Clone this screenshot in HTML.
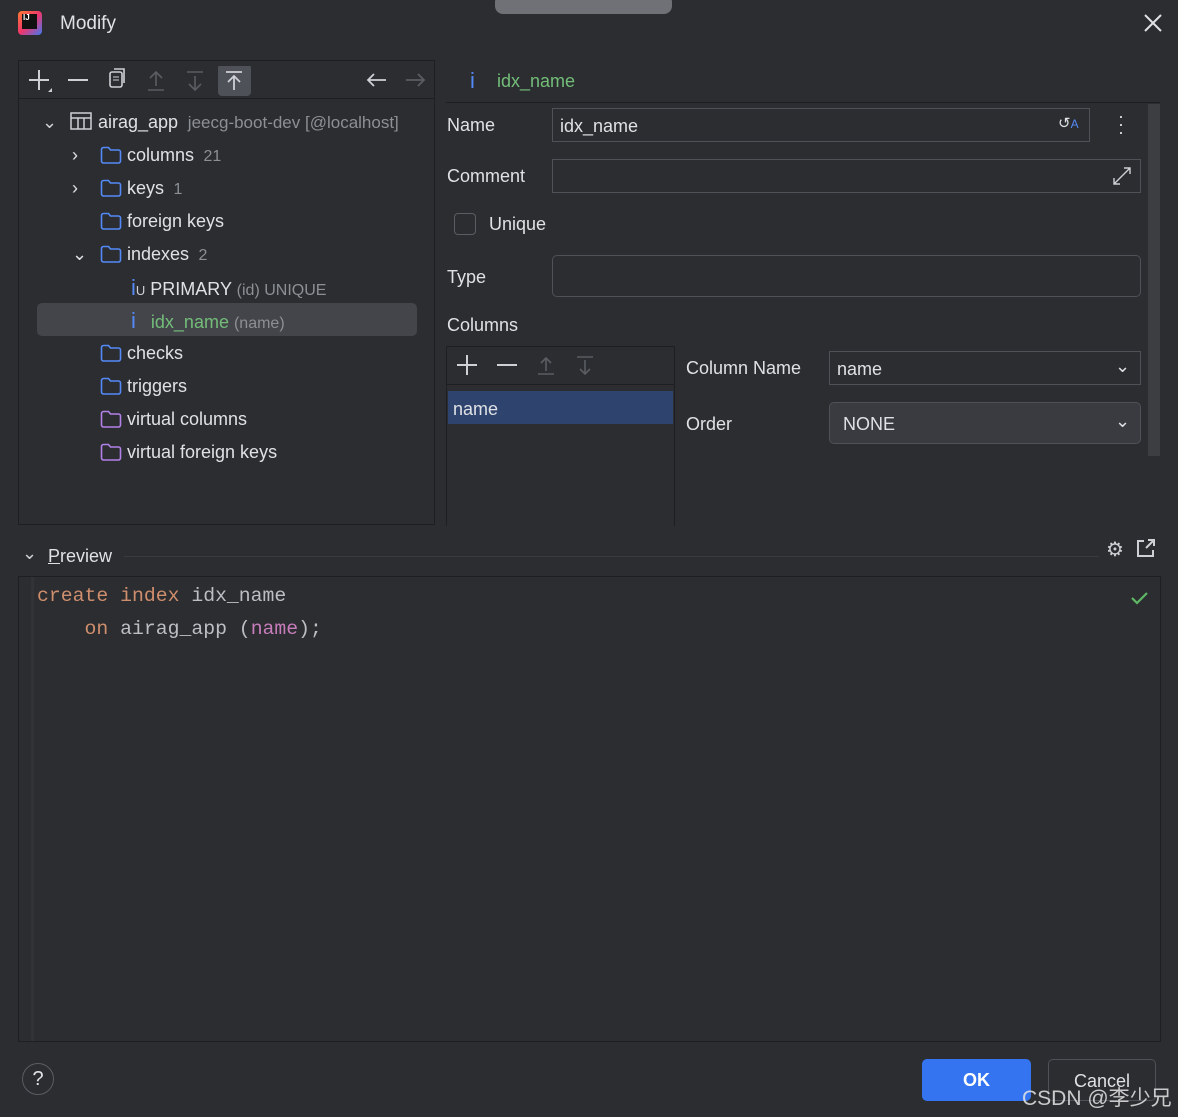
<!DOCTYPE html><html><head><style>
body{margin:0;width:1178px;height:1117px;background:#2b2d30;font-family:"Liberation Sans",sans-serif;color:#dfe1e5;position:relative;overflow:hidden;font-size:18px}
.a{position:absolute}
.mono{font-family:"Liberation Mono",monospace}
.row{position:absolute;height:33px;line-height:33px;white-space:nowrap}
.g{color:#8c8f94}
.fold{display:inline-block;width:22px;height:18px;vertical-align:-3px;margin-right:5px}
.inp{position:absolute;border:1px solid #4e5157;box-sizing:border-box;background:#2b2d30}
</style></head><body>
<svg width="0" height="0" style="position:absolute"><defs>
<symbol id="fb" viewBox="0 0 22 18"><path d="M1.5 3.5a2 2 0 0 1 2-2h5l2 2.5h8a2 2 0 0 1 2 2v9a2 2 0 0 1-2 2h-15a2 2 0 0 1-2-2z" fill="none" stroke="#548af7" stroke-width="1.6"/></symbol>
<symbol id="fv" viewBox="0 0 22 18"><path d="M1.5 3.5a2 2 0 0 1 2-2h5l2 2.5h8a2 2 0 0 1 2 2v9a2 2 0 0 1-2 2h-15a2 2 0 0 1-2-2z" fill="none" stroke="#b181e8" stroke-width="1.6"/></symbol>
</defs></svg>
<div class="a" style="left:495px;top:-6px;width:177px;height:20px;background:#6f7176;border-radius:8px"></div>
<div class="a" style="left:18px;top:11px;width:24px;height:24px;background:linear-gradient(135deg,#fd7b2f,#f0356c 50%,#3d7af5);border-radius:4px"></div>
<div class="a" style="left:22px;top:14px;width:15px;height:15px;background:#111"></div>
<div class="a" style="left:23px;top:13px;font-size:8px;color:#fff;font-weight:bold">IJ</div>
<div class="a" style="left:60px;top:13px;font-size:19px">Modify</div>
<svg class="a" style="left:1144px;top:14px" width="18" height="18"><path d="M1 1L17 17M17 1L1 17" stroke="#dfe1e5" stroke-width="2"/></svg>

<div class="a" style="left:18px;top:60px;width:417px;height:465px;border:1px solid #1e1f22;box-sizing:border-box"></div>
<div class="a" style="left:19px;top:98px;width:416px;height:1px;background:#1e1f22"></div>
<svg class="a" style="left:26px;top:66px" width="410" height="30">
<path d="M3 14h20M13 4v20" stroke="#ced0d6" stroke-width="2"/><path d="M22 26l4-4v4z" fill="#ced0d6"/>
<path d="M42 14h20" stroke="#ced0d6" stroke-width="2"/>
<rect x="84" y="6" width="12" height="15" rx="2" fill="none" stroke="#ced0d6" stroke-width="1.6"/><path d="M88 3h10v14" fill="none" stroke="#ced0d6" stroke-width="1.6"/><path d="M87 11h6M87 14h6" stroke="#ced0d6"/>
<path d="M122 24h16M130 20V6M124 12l6-6 6 6" fill="none" stroke="#5a5d63" stroke-width="1.6"/>
<path d="M161 6h16M169 10v14M163 18l6 6 6-6" fill="none" stroke="#5a5d63" stroke-width="1.6"/>
<rect x="192" y="-2" width="33" height="32" rx="4" fill="#4e5157"/>
<path d="M200 6h16M208 24V10M202 16l6-6 6 6" fill="none" stroke="#ced0d6" stroke-width="1.8"/>
<path d="M342 14h18M348 8l-6 6 6 6" fill="none" stroke="#ced0d6" stroke-width="1.8"/>
<path d="M380 14h18M392 8l6 6-6 6" fill="none" stroke="#5a5d63" stroke-width="1.8"/>
</svg>
<div class="a" style="left:37px;top:303px;width:380px;height:33px;background:#43454a;border-radius:5px"></div>
<div class="row" style="left:42px;top:106px"><span style="display:inline-block;width:28px;color:#ced0d6">⌄</span><svg width="22" height="18" style="vertical-align:-2px;margin-right:6px"><rect x="1" y="1" width="20" height="16" fill="none" stroke="#ced0d6" stroke-width="1.5"/><path d="M1 6h20M8 6v11M14 6v11" stroke="#ced0d6" stroke-width="1.5"/></svg>airag_app <span class="g" style="font-size:17px">&nbsp;jeecg-boot-dev [@localhost]</span></div>
<div class="row" style="left:72px;top:139px"><span style="display:inline-block;width:28px">›</span><svg class="fold"><use href="#fb"/></svg>columns <span class="g" style="font-size:16px">&nbsp;21</span></div>
<div class="row" style="left:72px;top:172px"><span style="display:inline-block;width:28px">›</span><svg class="fold"><use href="#fb"/></svg>keys <span class="g" style="font-size:16px">&nbsp;1</span></div>
<div class="row" style="left:100px;top:205px"><svg class="fold"><use href="#fb"/></svg>foreign keys</div>
<div class="row" style="left:72px;top:238px"><span style="display:inline-block;width:28px">⌄</span><svg class="fold"><use href="#fb"/></svg>indexes <span class="g" style="font-size:16px">&nbsp;2</span></div>
<div class="row" style="left:131px;top:271px"><span style="color:#548af7;font-size:22px">i</span><span style="font-size:13px;color:#ced0d6">U</span> PRIMARY <span class="g" style="font-size:16px">(id) UNIQUE</span></div>
<div class="row" style="left:131px;top:304px"><span style="color:#548af7;font-size:22px">i</span>&nbsp;&nbsp; <span style="color:#73bd79">idx_name</span> <span class="g" style="font-size:16px">(name)</span></div>
<div class="row" style="left:100px;top:337px"><svg class="fold"><use href="#fb"/></svg>checks</div>
<div class="row" style="left:100px;top:370px"><svg class="fold"><use href="#fb"/></svg>triggers</div>
<div class="row" style="left:100px;top:403px"><svg class="fold"><use href="#fv"/></svg>virtual columns</div>
<div class="row" style="left:100px;top:436px"><svg class="fold"><use href="#fv"/></svg>virtual foreign keys</div>

<div class="a" style="left:470px;top:68px;color:#548af7;font-size:22px">i</div>
<div class="a" style="left:497px;top:71px;color:#73bd79">idx_name</div>
<div class="a" style="left:446px;top:102px;width:714px;height:1px;background:#1e1f22"></div>
<div class="a" style="left:1148px;top:104px;width:12px;height:352px;background:#3c3e42"></div>
<div class="a" style="left:447px;top:115px">Name</div>
<div class="inp" style="left:552px;top:108px;width:538px;height:34px"><span class="a" style="left:7px;top:7px">idx_name</span><span class="a" style="left:505px;top:5px;font-size:15px">↺<span style="color:#548af7;font-size:12px">A</span></span></div>
<div class="a" style="left:1118px;top:112px;font-size:18px;line-height:8px">·<br>·<br>·</div>
<div class="a" style="left:447px;top:166px">Comment</div>
<div class="inp" style="left:552px;top:159px;width:589px;height:34px"><svg class="a" style="left:558px;top:5px" width="22" height="22"><path d="M3 19L19 3M13 3h6v6M3 13v6h6" fill="none" stroke="#ced0d6" stroke-width="1.4"/></svg></div>
<div class="a" style="left:454px;top:213px;width:22px;height:22px;border:1px solid #5a5d63;border-radius:4px;box-sizing:border-box"></div>
<div class="a" style="left:489px;top:214px">Unique</div>
<div class="a" style="left:447px;top:267px">Type</div>
<div class="inp" style="left:552px;top:255px;width:589px;height:42px;border-radius:5px"></div>
<div class="a" style="left:447px;top:315px">Columns</div>
<div class="a" style="left:446px;top:346px;width:229px;height:180px;border:1px solid #1e1f22;border-bottom:none;box-sizing:border-box"></div>
<div class="a" style="left:447px;top:384px;width:227px;height:1px;background:#1e1f22"></div>
<svg class="a" style="left:454px;top:352px" width="150" height="28"><path d="M3 13h20M13 3v20M43 13h20" stroke="#ced0d6" stroke-width="2"/><path d="M84 22h16M92 19V6M87 11l5-5 5 5M123 5h16M131 8v14M126 17l5 5 5-5" fill="none" stroke="#5a5d63" stroke-width="1.6"/></svg>
<div class="a" style="left:448px;top:391px;width:225px;height:33px;background:#2e436e"></div>
<div class="a" style="left:453px;top:399px">name</div>
<div class="a" style="left:686px;top:358px">Column Name</div>
<div class="inp" style="left:829px;top:351px;width:312px;height:34px"><span class="a" style="left:7px;top:7px">name</span><span class="a" style="left:285px;top:4px">⌄</span></div>
<div class="a" style="left:686px;top:414px">Order</div>
<div class="inp" style="left:829px;top:402px;width:312px;height:42px;border-radius:5px;background:#393b40"><span class="a" style="left:13px;top:11px">NONE</span><span class="a" style="left:285px;top:8px">⌄</span></div>

<div class="a" style="left:22px;top:543px;color:#ced0d6">⌄</div>
<div class="a" style="left:48px;top:546px"><u>P</u>review</div>
<div class="a" style="left:124px;top:556px;width:975px;height:1px;background:#393b40"></div>
<div class="a" style="left:1106px;top:537px;font-size:20px;color:#ced0d6">⚙</div>
<svg class="a" style="left:1136px;top:538px" width="20" height="20"><path d="M8 3H2v15h15v-6M10 10l8-8M12 2h6v6" fill="none" stroke="#ced0d6" stroke-width="2"/></svg>
<div class="a" style="left:18px;top:576px;width:1143px;height:466px;border:1px solid #1e1f22;box-sizing:border-box"></div>
<div class="a" style="left:31px;top:577px;width:3px;height:464px;background:#313337"></div>
<div class="a mono" style="left:37px;top:580px;font-size:19.8px;line-height:33px;white-space:pre;color:#bcbec4"><span style="color:#cf8e6d">create index</span> idx_name
    <span style="color:#cf8e6d">on</span> airag_app (<span style="color:#c77dbb">name</span>);</div>
<svg class="a" style="left:1130px;top:590px" width="20" height="16"><path d="M2 8l5 5 10-10" fill="none" stroke="#5fb865" stroke-width="2.2"/></svg>

<div class="a" style="left:22px;top:1063px;width:32px;height:32px;border:1px solid #5a5d63;border-radius:50%;box-sizing:border-box;text-align:center;line-height:30px;font-size:20px">?</div>
<div class="a" style="left:922px;top:1059px;width:109px;height:42px;background:#3574f0;border-radius:5px;text-align:center;line-height:42px;font-weight:bold;color:#fff">OK</div>
<div class="a" style="left:1048px;top:1059px;width:108px;height:42px;border:1px solid #4e5157;border-radius:5px;box-sizing:border-box;text-align:center;line-height:42px">Cancel</div>
<div class="a" style="left:1022px;top:1082px;font-family:'Liberation Sans','Noto Sans CJK SC',sans-serif;font-size:21px;color:rgba(230,230,230,0.85)">CSDN @李少兄</div>
</body></html>
